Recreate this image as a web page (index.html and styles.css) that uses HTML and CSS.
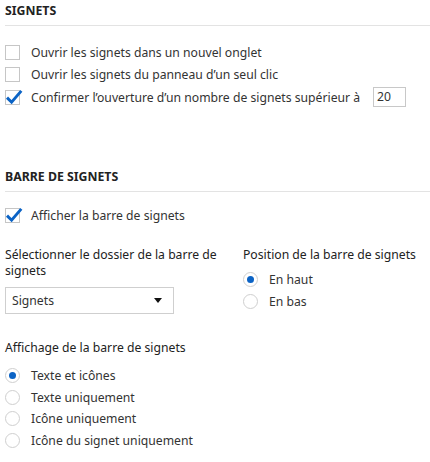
FILE: index.html
```html
<!DOCTYPE html>
<html lang="fr">
<head>
<meta charset="utf-8">
<link rel="stylesheet" href="styles.css">
</head>
<body>
<section class="section first">
  <h2 class="section-title">Signets</h2>
  <div class="options">
    <label class="row"><span class="box"></span><span>Ouvrir les signets dans un nouvel onglet</span></label>
    <label class="row"><span class="box"></span><span>Ouvrir les signets du panneau d’un seul clic</span></label>
    <label class="row"><span class="box"><svg viewBox="0 0 17 17" class="tick"><path d="M2 7.6 L6.6 12.2 L16.3 0.9" fill="none" stroke="#0b63c5" stroke-width="2.9"/></svg></span><span>Confirmer l’ouverture d’un nombre de signets supérieur à</span><span class="num">20</span></label>
  </div>
</section>
<section class="section second">
  <h2 class="section-title">Barre de signets</h2>
  <div class="options">
    <label class="row"><span class="box"><svg viewBox="0 0 17 17" class="tick"><path d="M2 7.6 L6.6 12.2 L16.3 0.9" fill="none" stroke="#0b63c5" stroke-width="2.9"/></svg></span><span>Afficher la barre de signets</span></label>
  </div>
  <div class="cols">
    <div class="col left">
      <div class="label">Sélectionner le dossier de la barre de signets</div>
      <div class="select"><span>Signets</span><span class="arrow"></span></div>
    </div>
    <div class="col right">
      <div class="label">Position de la barre de signets</div>
      <div class="radios">
        <label class="row radio-row"><span class="radio on"></span><span>En haut</span></label>
        <label class="row radio-row"><span class="radio"></span><span>En bas</span></label>
      </div>
    </div>
  </div>
  <div class="label display-label">Affichage de la barre de signets</div>
  <div class="radios list">
    <label class="row radio-row"><span class="radio on"></span><span>Texte et icônes</span></label>
    <label class="row radio-row"><span class="radio"></span><span>Texte uniquement</span></label>
    <label class="row radio-row"><span class="radio"></span><span>Icône uniquement</span></label>
    <label class="row radio-row"><span class="radio"></span><span>Icône du signet uniquement</span></label>
  </div>
</section>
</body>
</html>
```
FILE: styles.css
```css
* { box-sizing: border-box; }
html, body { margin: 0; padding: 0; background: #fff; }
body {
  font-family: "Noto Sans", "Open Sans", sans-serif;
  font-size: 12.2px;
  color: #333;
  padding: 0 0 0 5px;
  width: 430px;
  height: 462px;
  overflow: hidden;
}
.section-title {
  margin: 0;
  font-size: 12.3px;
  font-weight: 700;
  text-transform: uppercase;
  color: #222;
  line-height: 16px;
  padding: 3px 0 6px;
  border-bottom: 1px solid #e3e3e3;
}
.first .options { margin-top: 15px; }
.second { margin-top: 57px; }
.second .options { margin-top: 13px; }
.row {
  display: flex;
  align-items: center;
  gap: 11px;
  height: 22.5px;
}
.box {
  width: 15px;
  height: 15px;
  border: 1px solid #c6c6c6;
  background: #fff;
  position: relative;
  flex: none;
}
.tick {
  position: absolute;
  left: -1px;
  top: -1px;
  width: 17px;
  height: 17px;
  overflow: visible;
}
.num {
  margin-left: 2px;
  width: 33px;
  height: 20px;
  border: 1px solid #c8c8c8;
  padding-left: 3px;
  line-height: 18px;
}
.cols {
  display: flex;
  margin-top: 19.5px;
}
.col.left { width: 238px; flex: none; }
.label {
  color: #222;
  line-height: 16px;
}
.select {
  margin-top: 8px;
  width: 169px;
  height: 27px;
  border: 1px solid #cfcfcf;
  display: flex;
  align-items: center;
  justify-content: space-between;
  padding: 0 11px 0 6px;
}
.arrow {
  width: 0;
  height: 0;
  border-left: 4.5px solid transparent;
  border-right: 4.5px solid transparent;
  border-top: 5px solid #111;
}
.radios { margin-top: 6px; }
.radio-row { gap: 11px; height: 22px; }
.list .radio-row { height: 21.7px; }
.radio {
  width: 15px;
  height: 15px;
  border-radius: 50%;
  border: 1px solid #cfcfcf;
  flex: none;
  position: relative;
}
.radio.on::after {
  content: "";
  position: absolute;
  left: 3px;
  top: 3px;
  width: 7px;
  height: 7px;
  border-radius: 50%;
  background: #0b63c5;
}
.display-label { margin-top: 26px; }
.list { margin-top: 9px; }
```
